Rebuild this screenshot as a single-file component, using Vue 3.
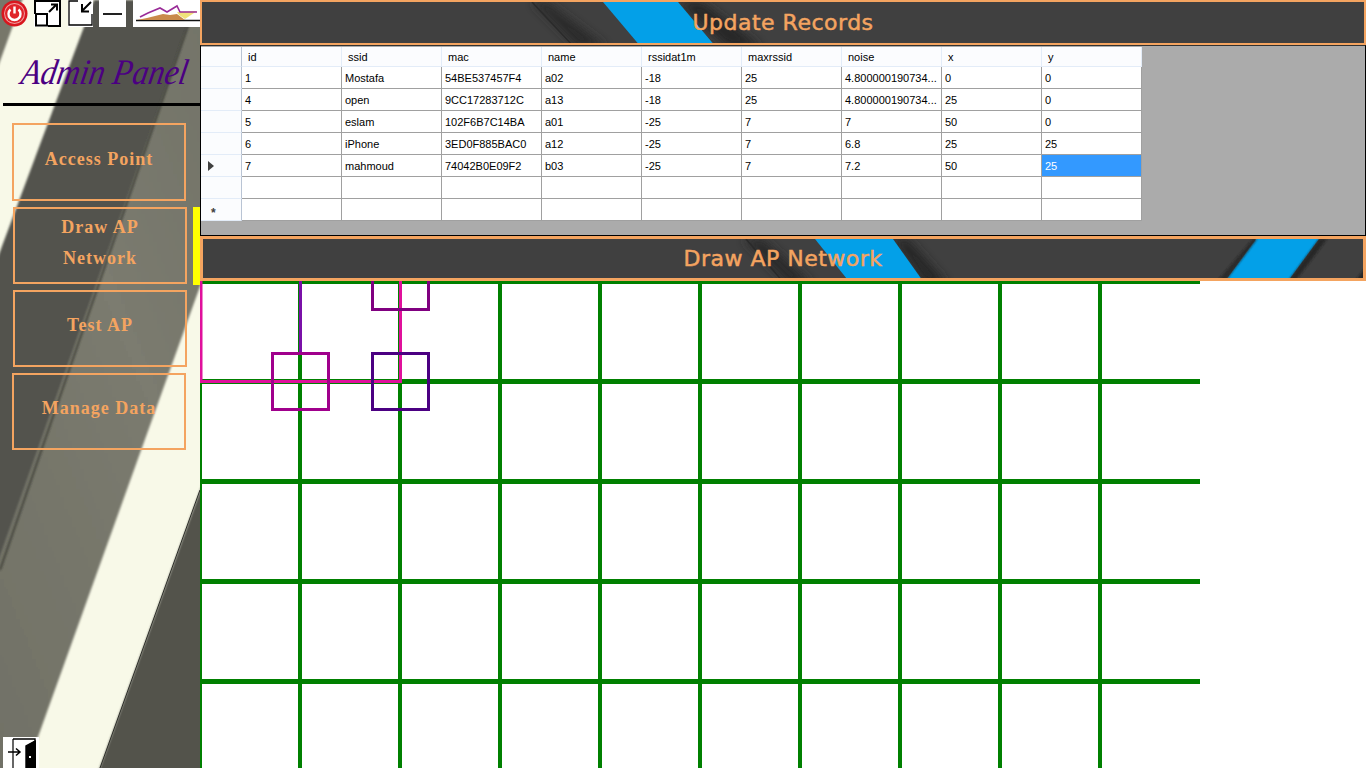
<template>
  <div class="app">
    <aside class="sidebar">
      <svg class="side-bg" width="200" height="768" viewBox="0 0 200 768">
        <defs>
          <filter id="soft"><feGaussianBlur stdDeviation="1" /></filter>
          <filter id="softer"><feGaussianBlur stdDeviation="5" /></filter>
          <linearGradient id="greyBand" x1="0" y1="1" x2="1" y2="0">
            <stop offset="0" stop-color="#717166" />
            <stop offset="0.5" stop-color="#7b7b6f" />
            <stop offset="1" stop-color="#6f7066" />
          </linearGradient>
        </defs>
        <rect width="200" height="768" fill="#f8f9e8" />
        <g filter="url(#soft)">
          <polygon points="-5,-5 24,-5 -5,75" fill="#77776b" />
          <polygon points="94,0 197,0 0,570 -5,570 -5,265" fill="#52534d" />
          <polygon points="197,0 303,0 25,773 -5,773 -5,570" fill="url(#greyBand)" />
          <polygon points="210,463 210,773 98,773" fill="#52534c" />
        </g>
        <line x1="197" y1="0" x2="0" y2="570" stroke="#35362f" stroke-width="1.5" filter="url(#soft)" />
        <line x1="200" y1="490" x2="100" y2="768" stroke="#2c2d28" stroke-width="1" />
      </svg>

      <div class="top-icons">
        <button class="icon-btn power">
          <svg width="27" height="27" viewBox="0 0 27 27">
            <circle cx="13.5" cy="13.5" r="13" fill="#d8161e" />
            <circle cx="13.5" cy="13.5" r="10.5" fill="#f0a0a0" />
            <circle cx="13.5" cy="13.5" r="9.5" fill="#e0242a" />
            <path d="M9.5 9.5a6 6 0 1 0 8 0" fill="none" stroke="#fff" stroke-width="2.4" />
            <line x1="13.5" y1="6.5" x2="13.5" y2="13.5" stroke="#fff" stroke-width="2.4" />
          </svg>
        </button>
        <button class="icon-btn expand">
          <svg width="27" height="27" viewBox="0 0 27 27">
            <path d="M1 14V1H26V26H14" fill="none" stroke="#000" stroke-width="2" />
            <rect x="2" y="14" width="11" height="11.5" fill="none" stroke="#000" stroke-width="2" />
            <path d="M15 12L22 5M17 4.500H23V10.500" fill="none" stroke="#000" stroke-width="2" />
          </svg>
        </button>
        <button class="icon-btn shrink">
          <svg width="25" height="27" viewBox="0 0 25 27">
            <path d="M10 1H1V25H24V14" fill="none" stroke="#000" stroke-width="1.300" />
            <path d="M23 2L15 10M14 4V11.500H21" fill="none" stroke="#000" stroke-width="2" />
          </svg>
        </button>
        <button class="icon-btn minimize">
          <span class="dash"></span>
        </button>
        <div class="logo">
          <svg width="67" height="27" viewBox="0 0 67 27">
            <path d="M3 20.500H67" stroke="#111" stroke-width="1.500" />
            <path d="M4 20L14 18L30 14L37 15L44 14L52 20Z" fill="#c98a4a" />
            <path d="M44 12L64 11L52 19L46 15Z" fill="#f0e27a" />
            <path d="M7 17L15 13L27 8L34 12L44 6L47 12L64 12" fill="none" stroke="#9a2c98" stroke-width="1.600" />
          </svg>
        </div>
      </div>

      <h2 class="panel-title"><span>Admin Panel</span></h2>
      <div class="title-rule"></div>

      <nav class="menu">
        <button
          v-for="item in menu"
          :key="item.label"
          class="menu-btn"
          :class="{ shifted: item.shifted }"
        >
          <span>{{ item.label }}</span>
        </button>
      </nav>

      <div class="exit-icon">
        <svg width="36" height="31" viewBox="0 0 36 31">
          <path d="M10 2H32V4L23 9V31" fill="none" stroke="#000" stroke-width="1.400" />
          <polygon points="23,9 33,3 33,31 23,31" fill="#000" />
          <rect x="26" y="19" width="2" height="2" fill="#fff" />
          <path d="M10 2V31" stroke="#000" stroke-width="1.200" />
          <path d="M5 15H17M13 11.500L17 15L13 18.500" fill="none" stroke="#000" stroke-width="1.500" />
        </svg>
      </div>
    </aside>

    <span class="active-mark"></span>

    <main class="content">
      <header class="banner first">
        <svg class="banner-bg" width="1166" height="45" viewBox="0 0 1166 45">
          <polygon points="330,0 375,45 405,45 345,0" fill="#2c2c2c" filter="url(#softer)" />
          <line x1="330" y1="0" x2="372" y2="45" stroke="#2a2a2a" stroke-width="1.500" />
          <polygon points="476,0 526,45 560,45 500,0" fill="#262626" filter="url(#softer)" />
          <polygon points="401,0 476,0 514,45 439,45" fill="#03a0e8" />
        </svg>
        <h1>Update Records</h1>
      </header>

      <section class="grid-panel">
        <table class="records">
          <thead>
            <tr>
              <th class="row-head"></th>
              <th v-for="col in columns" :key="col">{{ col }}</th>
            </tr>
          </thead>
          <tbody>
            <tr v-for="(row, r) in rows" :key="r">
              <td class="row-head">
                <span v-if="r === currentRow" class="caret"></span>
                <span v-if="r === rows.length - 1" class="star">*</span>
              </td>
              <td
                v-for="(val, c) in row"
                :key="c"
                :class="{ selected: r === currentRow && c === row.length - 1 }"
              >{{ val }}</td>
            </tr>
          </tbody>
        </table>
      </section>

      <header class="banner second">
        <svg class="banner-bg" width="1166" height="45" viewBox="0 0 1166 45">
          <polygon points="540,0 585,45 610,45 560,0" fill="#2c2c2c" filter="url(#softer)" />
          <line x1="543" y1="0" x2="582" y2="45" stroke="#2a2a2a" stroke-width="1.500" />
          <polygon points="690,0 722,45 745,45 705,0" fill="#262626" filter="url(#softer)" />
          <polygon points="612,0 690,0 722,45 648,45" fill="#03a0e8" />
          <polygon points="1053,0 1116,0 1083,45 1020,45" fill="#03a0e8" />
          <polygon points="1050,0 1054,0 1020,45 1012,45" fill="#2a2a2a" filter="url(#soft)" />
          <polygon points="1116,0 1124,0 1090,45 1083,45" fill="#262626" filter="url(#soft)" />
          <polygon points="1166,24 1166,45 1150,45" fill="#262626" filter="url(#soft)" />
        </svg>
        <h1>Draw AP Network</h1>
      </header>

      <svg class="canvas" width="1166" height="487" viewBox="0 0 1166 487">
        <g stroke="#008000">
          <line v-for="x in vLines" :key="'v' + x" :x1="x" y1="0" :x2="x" y2="487" stroke-width="4" />
          <line v-for="y in hLines" :key="'h' + y" x1="0" :y1="y" x2="1000" :y2="y" stroke-width="5" />
        </g>
        <line x1="100.5" y1="0" x2="100.5" y2="72" stroke="#7a10a8" stroke-width="3" />
        <path d="M1 0V100.500H200.500V0" fill="none" stroke="#e0109c" stroke-width="3" />
        <rect
          v-for="box in boxes"
          :key="box.color"
          :x="box.x"
          :y="box.y"
          width="56"
          height="56"
          fill="none"
          :stroke="box.color"
          stroke-width="3"
        />
      </svg>
    </main>
  </div>
</template>

<script setup>
const menu = [
  { label: "Access Point" },
  { label: "Draw AP Network", shifted: true },
  { label: "Test AP", shifted: true },
  { label: "Manage Data" },
];

const columns = ["id", "ssid", "mac", "name", "rssidat1m", "maxrssid", "noise", "x", "y"];

const rows = [
  ["1", "Mostafa", "54BE537457F4", "a02", "-18", "25", "4.800000190734...", "0", "0"],
  ["4", "open", "9CC17283712C", "a13", "-18", "25", "4.800000190734...", "25", "0"],
  ["5", "eslam", "102F6B7C14BA", "a01", "-25", "7", "7", "50", "0"],
  ["6", "iPhone", "3ED0F885BAC0", "a12", "-25", "7", "6.8", "25", "25"],
  ["7", "mahmoud", "74042B0E09F2", "b03", "-25", "7", "7.2", "50", "25"],
  ["", "", "", "", "", "", "", "", ""],
  ["", "", "", "", "", "", "", "", ""],
];
const currentRow = 4;

const vLines = [0, 100, 200, 300, 400, 500, 600, 700, 800, 900];
const hLines = [0.5, 100.5, 200.5, 300.5, 400.5];

const boxes = [
  { x: 172.5, y: -27.5, color: "#800080" },
  { x: 72.5, y: 72.5, color: "#a0008c" },
  { x: 172.5, y: 72.5, color: "#4b0082" },
];
</script>

<style>
html,
body {
  margin: 0;
  overflow: hidden;
}
</style>

<style scoped>
.app {
  display: flex;
  width: 1366px;
  height: 768px;
  overflow: hidden;
  background: #fff;
  position: relative;
}

.sidebar {
  position: relative;
  width: 200px;
  height: 768px;
  flex-shrink: 0;
  display: flex;
  flex-direction: column;
  overflow: hidden;
}

.side-bg {
  position: absolute;
  left: 0;
  top: 0;
}

.top-icons {
  position: relative;
  display: flex;
  height: 28px;
  padding-left: 1px;
}

.icon-btn {
  padding: 0;
  border: none;
  background: #fff;
  display: block;
  height: 27px;
}

.power {
  width: 27px;
  background: none;
}

.expand {
  width: 27px;
  margin-left: 6px;
}

.shrink {
  width: 25px;
  margin-left: 7px;
}

.minimize {
  width: 27px;
  margin-left: 6px;
  display: flex;
  align-items: center;
  justify-content: center;
}

.dash {
  width: 19px;
  height: 2px;
  background: #222;
}

.logo {
  width: 67px;
  height: 27px;
  margin-left: 7px;
  background: #fff;
}

.panel-title {
  position: relative;
  margin: 21px 0 0;
  height: 54px;
  padding-left: 22px;
  font-family: "Liberation Serif", serif;
  font-style: italic;
  font-weight: 400;
  font-size: 32px;
  line-height: 46px;
  color: #4b0082;
  white-space: nowrap;
}

.panel-title span {
  display: inline-block;
  transform: skewX(-10deg) scaleY(1.12);
}

.title-rule {
  position: relative;
  height: 3px;
  margin-left: 3px;
  background: #000;
}

.menu {
  position: relative;
  display: flex;
  flex-direction: column;
  gap: 6px;
  margin-top: 17px;
  padding-left: 12px;
}

.menu-btn {
  box-sizing: border-box;
  width: 174px;
  height: 77px;
  padding: 0 16px 6px;
  border: 2px solid #f4a460;
  background: transparent;
  font-family: "Liberation Serif", serif;
  font-weight: 700;
  font-size: 18px;
  letter-spacing: 1px;
  line-height: 31px;
  color: #f4a460;
}

.menu-btn:first-child {
  height: 78px;
}

.menu-btn.shifted {
  margin-left: 1px;
}

.exit-icon {
  position: absolute;
  left: 3px;
  bottom: 0;
  width: 36px;
  height: 31px;
  background: #fff;
}

.active-mark {
  position: absolute;
  left: 193px;
  top: 207px;
  width: 7px;
  height: 78px;
  background: #ffff00;
}

.content {
  width: 1166px;
  display: flex;
  flex-direction: column;
}

.banner {
  position: relative;
  box-sizing: border-box;
  flex-shrink: 0;
  display: flex;
  align-items: center;
  justify-content: center;
  background: #404040;
  overflow: hidden;
}

.banner.first {
  height: 45px;
  border: 2px solid #f4a460;
}

.banner.second {
  height: 45px;
  border: 3px solid #f4a460;
}

.banner-bg {
  position: absolute;
  left: 0;
  top: 0;
}

.banner h1 {
  position: relative;
  margin: 0;
  font-family: "DejaVu Sans", sans-serif;
  font-weight: 400;
  font-size: 22px;
  color: #f4a460;
  -webkit-text-stroke: 0.5px #f4a460;
  letter-spacing: 0.5px;
}

.grid-panel {
  box-sizing: border-box;
  height: 191px;
  flex-shrink: 0;
  padding-top: 1px;
  background: #ababab;
  border-top: 1px solid #333;
  border-left: 1px solid #000;
  border-right: 1px solid #000;
  border-bottom: 1px solid #000;
}

.records {
  border-collapse: separate;
  border-spacing: 0;
  table-layout: fixed;
  width: 941px;
  background: #fff;
  font-family: "Liberation Sans", sans-serif;
  font-size: 11px;
  color: #000;
}

.records th,
.records td {
  box-sizing: border-box;
  width: 100px;
  padding: 0 3px;
  text-align: left;
  font-weight: 400;
  white-space: nowrap;
  overflow: hidden;
  border-right: 1px solid #a0a0a0;
  border-bottom: 1px solid #a0a0a0;
}

.records th {
  height: 20px;
  padding-left: 6px;
  background: #fbfcfe;
  border-right-color: #e3ecf8;
  border-bottom-color: #e3ecf8;
}

.records td {
  height: 22px;
}

.records th.row-head,
.records td.row-head {
  width: 41px;
  padding: 0;
  position: relative;
  background: #fbfcfe;
  border-right-color: #b9c4d4;
  border-bottom-color: #e3ecf8;
}

.records td.selected {
  background: #3399ff;
  color: #fff;
}

.caret {
  display: block;
  width: 0;
  height: 0;
  margin-left: 7px;
  border-left: 6px solid #404040;
  border-top: 5px solid transparent;
  border-bottom: 5px solid transparent;
}

.star {
  display: block;
  margin-left: 10px;
  margin-top: 6px;
  font-size: 12px;
  line-height: 14px;
  font-weight: 700;
  color: #404040;
}

.canvas {
  display: block;
  flex-shrink: 0;
  margin-top: 0;
}
</style>
